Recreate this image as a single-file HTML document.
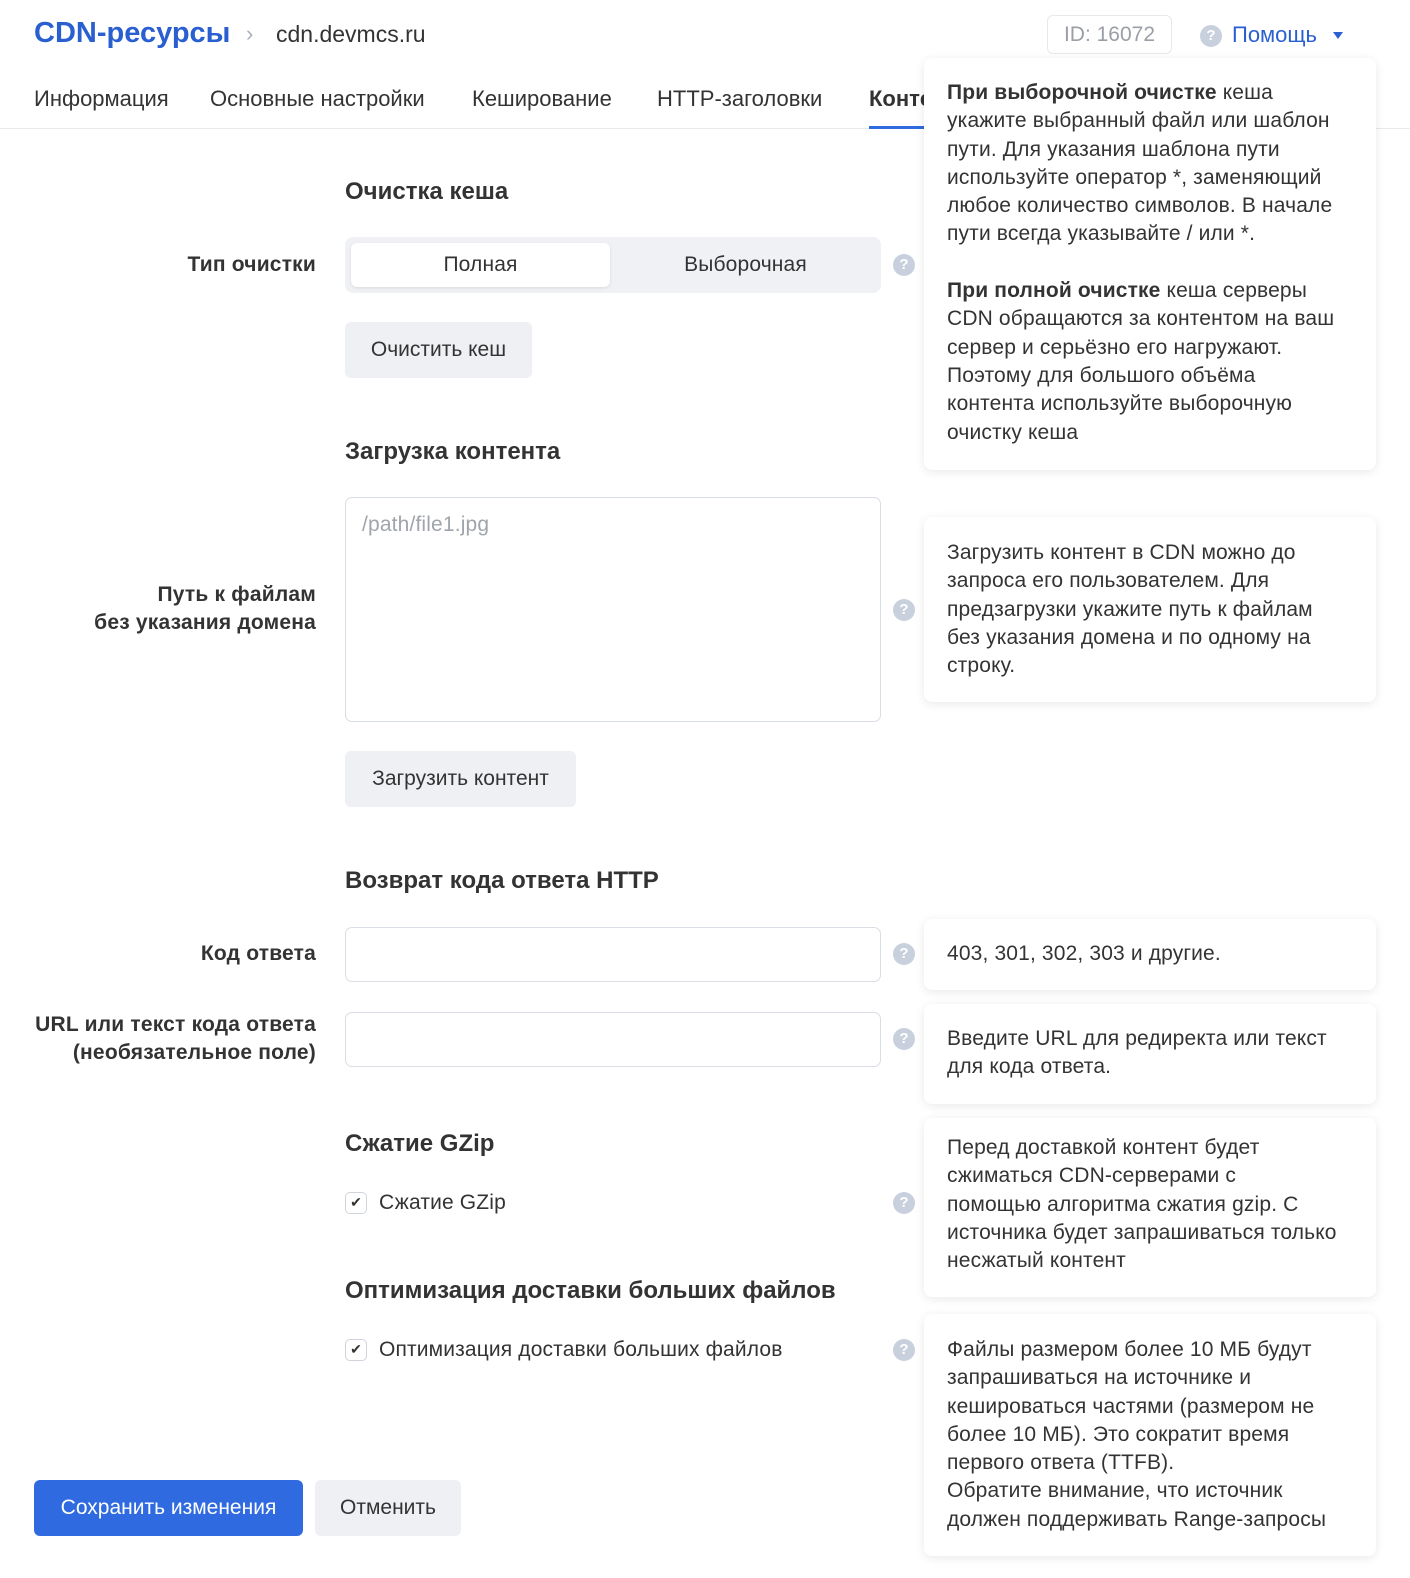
<!DOCTYPE html>
<html><head><meta charset="utf-8"><style>
*{box-sizing:border-box;margin:0;padding:0}
body{width:1410px;height:1578px;position:relative;background:#fff;font-family:"Liberation Sans","Noto Sans CJK SC",sans-serif;color:#333;overflow:hidden}
.a{position:absolute;white-space:nowrap}
.t{font-size:22px;line-height:28px;height:28px}
.h{font-size:24px;font-weight:bold;color:#333;line-height:30px}
.lbl{font-size:21px;font-weight:bold;color:#333;text-align:right;right:1094px;line-height:28.3px;letter-spacing:0.2px}
.q{position:absolute;width:22px;height:22px;border-radius:50%;background:#c9d0dd;color:#fff;font-weight:bold;font-size:15px;line-height:22px;text-align:center;left:893px}
.tip{position:absolute;left:924px;width:452px;background:#fff;box-shadow:0 2px 10px rgba(0,0,0,0.09);border-radius:8px;padding:0 23px;font-size:21px;line-height:28.3px;color:#333;white-space:nowrap;letter-spacing:0.15px}
.btn{position:absolute;background:#eef0f4;border-radius:6px;font-size:21px;color:#333;text-align:center;line-height:56px;height:56px}
.inp{position:absolute;left:345px;width:536px;border:1.5px solid #d9dde4;border-radius:7px;background:#fff}
.cb{position:absolute;left:345px;width:22px;height:22px;border:1.5px solid #cfd4dc;border-radius:5px;font-size:14px;line-height:19px;text-align:center;color:#333}
.ct{font-size:21px;line-height:28px;letter-spacing:0.15px}
</style></head><body>
<div class="a" style="left:34px;top:15px;font-size:29px;font-weight:bold;color:#2a5fd1;line-height:36px">CDN-ресурсы</div>
<div class="a" style="left:246px;top:20px;font-size:22px;color:#aab0ba;line-height:28px">›</div>
<div class="a" style="left:276px;top:19px;font-size:23px;color:#333;line-height:30px">cdn.devmcs.ru</div>
<div class="a" style="left:1047px;top:15px;width:125px;height:39px;border:1.5px solid #e6e8ec;border-radius:6px;font-size:21px;color:#9a9ea6;line-height:37px;text-align:center">ID: 16072</div>
<div class="q" style="left:1200px;top:25px">?</div>
<div class="a" style="left:1232px;top:21px;font-size:22px;color:#2a5fd1;line-height:28px">Помощь</div>
<div class="a" style="left:1333px;top:32px;width:0;height:0;border-left:5px solid transparent;border-right:5px solid transparent;border-top:7px solid #2a5fd1"></div>

<div class="a t" style="left:34px;top:85px">Информация</div>
<div class="a t" style="left:210px;top:85px">Основные настройки</div>
<div class="a t" style="left:472px;top:85px">Кеширование</div>
<div class="a t" style="left:657px;top:85px">HTTP-заголовки</div>
<div class="a t" style="left:869px;top:85px;font-weight:bold;width:55px;overflow:hidden">Контент</div>
<div class="a" style="left:0;top:128px;width:1410px;height:1px;background:#e8eaee"></div>
<div class="a" style="left:869px;top:126px;width:55px;height:3px;background:#2f6ae0"></div>

<div class="tip" style="top:58px;height:412px;padding-top:21px"><b>При выборочной очистке</b> кеша<br>укажите выбранный файл или шаблон<br>пути. Для указания шаблона пути<br>используйте оператор *, заменяющий<br>любое количество символов. В начале<br>пути всегда указывайте / или *.<br><br><b>При полной очистке</b> кеша серверы<br>CDN обращаются за контентом на ваш<br>сервер и серьёзно его нагружают.<br>Поэтому для большого объёма<br>контента используйте выборочную<br>очистку кеша</div>

<div class="a h" style="left:345px;top:177px">Очистка кеша</div>
<div class="a lbl" style="top:251px">Тип очистки</div>
<div class="a" style="left:345px;top:237px;width:536px;height:56px;background:#eff1f5;border-radius:8px"></div>
<div class="a ct" style="left:351px;top:243px;width:259px;height:44px;background:#fff;border-radius:6px;box-shadow:0 1px 3px rgba(0,0,0,0.1);line-height:44px;text-align:center">Полная</div>
<div class="a ct" style="left:610px;top:243px;width:271px;height:44px;line-height:44px;text-align:center">Выборочная</div>
<div class="q" style="top:254px">?</div>
<div class="btn" style="left:345px;top:322px;width:187px">Очистить кеш</div>

<div class="a h" style="left:345px;top:437px">Загрузка контента</div>
<div class="inp" style="top:497px;height:225px"></div>
<div class="a ct" style="left:362px;top:511px;color:#a0a4ab">/path/file1.jpg</div>
<div class="a lbl" style="top:581px">Путь к файлам<br>без указания домена</div>
<div class="q" style="top:599px">?</div>
<div class="tip" style="top:517px;height:185px;padding-top:22px">Загрузить контент в CDN можно до<br>запроса его пользователем. Для<br>предзагрузки укажите путь к файлам<br>без указания домена и по одному на<br>строку.</div>
<div class="btn" style="left:345px;top:751px;width:231px">Загрузить контент</div>

<div class="a h" style="left:345px;top:866px">Возврат кода ответа HTTP</div>
<div class="a lbl" style="top:940px">Код ответа</div>
<div class="inp" style="top:927px;height:55px"></div>
<div class="q" style="top:943px">?</div>
<div class="tip" style="top:919px;height:71px;padding-top:21px">403, 301, 302, 303 и другие.</div>

<div class="a lbl" style="top:1011px">URL или текст кода ответа<br>(необязательное поле)</div>
<div class="inp" style="top:1012px;height:55px"></div>
<div class="q" style="top:1028px">?</div>
<div class="tip" style="top:1004px;height:100px;padding-top:21px">Введите URL для редиректа или текст<br>для кода ответа.</div>

<div class="a h" style="left:345px;top:1129px">Сжатие GZip</div>
<div class="cb" style="top:1192px">✔</div>
<div class="a ct" style="left:379px;top:1189px">Сжатие GZip</div>
<div class="q" style="top:1192px">?</div>
<div class="tip" style="top:1118px;height:179px;padding-top:16px">Перед доставкой контент будет<br>сжиматься CDN-серверами с<br>помощью алгоритма сжатия gzip. С<br>источника будет запрашиваться только<br>несжатый контент</div>

<div class="a h" style="left:345px;top:1276px">Оптимизация доставки больших файлов</div>
<div class="cb" style="top:1339px">✔</div>
<div class="a ct" style="left:379px;top:1336px">Оптимизация доставки больших файлов</div>
<div class="q" style="top:1339px">?</div>
<div class="tip" style="top:1314px;height:242px;padding-top:22px">Файлы размером более 10 МБ будут<br>запрашиваться на источнике и<br>кешироваться частями (размером не<br>более 10 МБ). Это сократит время<br>первого ответа (TTFB).<br>Обратите внимание, что источник<br>должен поддерживать Range-запросы</div>

<div class="btn" style="left:34px;top:1480px;width:269px;background:#2f6ae0;color:#fff">Сохранить изменения</div>
<div class="btn" style="left:315px;top:1480px;width:146px">Отменить</div>
</body></html>
